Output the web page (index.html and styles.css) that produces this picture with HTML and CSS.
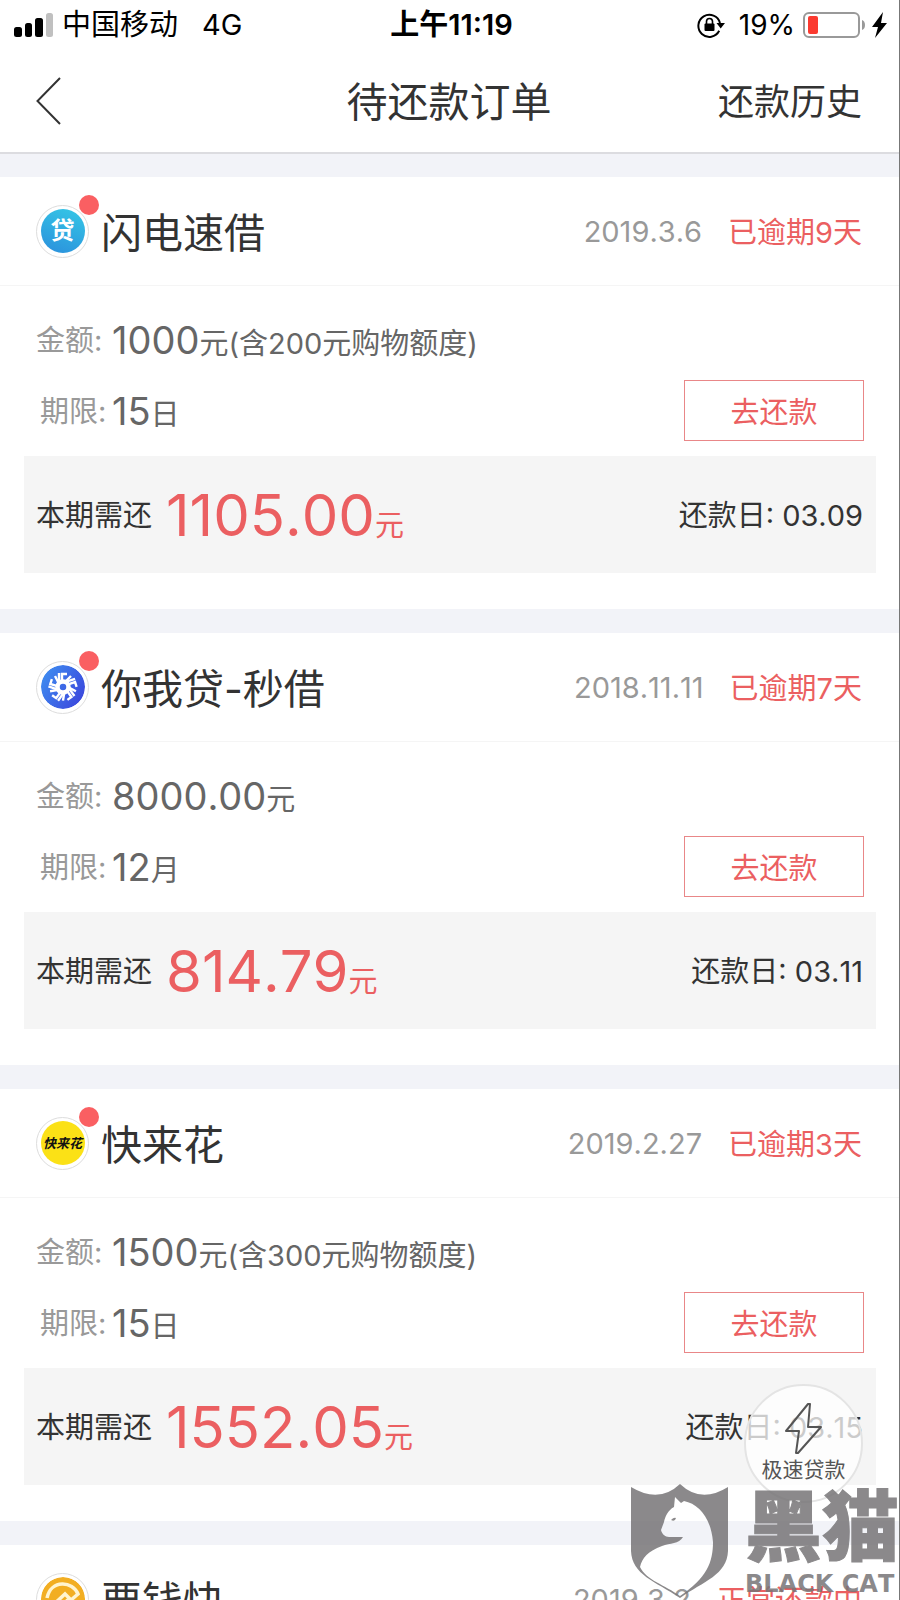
FILE: index.html
```html
<!DOCTYPE html>
<html lang="zh-CN">
<head>
  <meta charset="UTF-8" />
  <meta name="viewport" content="width=device-width, initial-scale=1.0"/>
  <title>待还款订单</title>
  <link rel="stylesheet" href="styles.css">
</head>
<body>

  <div class="screen">

    <div class="status-bar">
      <div class="status-left">
        <svg class="signal" width="40" height="26" viewBox="0 0 40 26">
          <rect x="0" y="15" width="8" height="10" rx="2.5" />
          <rect x="11" y="11" width="7" height="14" rx="2.5" />
          <rect x="21" y="6" width="8" height="19" rx="2.5" />
          <rect x="32" y="1" width="7" height="24" rx="2.5" fill="#c0c0c0" />
        </svg>
        <span class="carrier">中国移动</span>
        <span>4G</span>
      </div>
      <div class="clock">上午11:19</div>
      <div class="status-right">
        <svg width="28" height="26" viewBox="0 0 28 26">
          <path d="M22.2 18.8A11 11 0 1 1 23 11" fill="none" stroke="#000" stroke-width="2" />
          <path d="M19.5 11h8.5l-4.3 5.5z" />
          <rect x="7.5" y="11.5" width="10" height="7.5" rx="1" />
          <path d="M9.5 12V9.500a3 3 0 0 1 6 0V12" fill="none" stroke="#000" stroke-width="1.6" />
        </svg>
        <span class="percent">19%</span>
        <svg width="86" height="28" viewBox="0 0 86 28">
          <rect x="1" y="2" width="55" height="24" rx="5" fill="#fff" stroke="#999" stroke-width="2" />
          <rect x="5" y="5" width="10" height="18" rx="2" fill="#fb3a30" />
          <path d="M59 9q3 1 3 5t-3 5z" fill="#999" />
          <path d="M80 1L69 16h6l-3 11 12-15h-6z" />
        </svg>
      </div>
    </div>

    <header class="nav">
      <a class="back" href="#" aria-label="返回">
        <svg width="26" height="48" viewBox="0 0 26 48">
          <path d="M24 1L1.500 24 24 47" fill="none" stroke="#333" stroke-width="2" />
        </svg>
      </a>
      <h1>待还款订单</h1>
      <a class="history" href="#">还款历史</a>
    </header>

    <main class="orders">

      <section class="order">
        <div class="order-head">
          <div class="logo"><span class="logo-face blue">贷</span><i class="dot"></i></div>
          <h2>闪电速借</h2>
          <span class="date">2019.3.6</span>
          <span class="state">已逾期9天</span>
        </div>
        <div class="order-info">
          <div class="row"><span class="label">金额:</span><span class="value"><b>1000</b>元(含200元购物额度)</span></div>
          <div class="row">
            <span class="label term">期限:</span><span class="value"><b>15</b>日</span>
            <button class="pay">去还款</button>
          </div>
        </div>
        <div class="due">
          <span class="due-label">本期需还</span>
          <span class="sum"><b>1105.00</b>元</span>
          <span class="due-label due-day">还款日: 03.09</span>
        </div>
      </section>

      <section class="order">
        <div class="order-head">
          <div class="logo">
            <svg class="logo-face" width="44" height="44" viewBox="-22 -22 44 44">
              <defs>
                <linearGradient id="indigo" x1="0" y1="0.2" x2="1" y2="0.8">
                  <stop offset="0" stop-color="#3f8df0" />
                  <stop offset="1" stop-color="#3b45dc" />
                </linearGradient>
                <path id="blade" d="M-4 -4V-14M-1 -4V-13H4M2 -5L8 -11" />
              </defs>
              <circle r="22" fill="url(#indigo)" />
              <g fill="none" stroke="#fff" stroke-width="2.400">
                <circle r="5.500" stroke-width="4.500" />
                <use href="#blade" />
                <use href="#blade" transform="rotate(72)" />
                <use href="#blade" transform="rotate(144)" />
                <use href="#blade" transform="rotate(216)" />
                <use href="#blade" transform="rotate(288)" />
              </g>
            </svg>
            <i class="dot"></i>
          </div>
          <h2>你我贷-秒借</h2>
          <span class="date">2018.11.11</span>
          <span class="state">已逾期7天</span>
        </div>
        <div class="order-info">
          <div class="row"><span class="label">金额:</span><span class="value"><b>8000.00</b>元</span></div>
          <div class="row">
            <span class="label term">期限:</span><span class="value"><b>12</b>月</span>
            <button class="pay">去还款</button>
          </div>
        </div>
        <div class="due">
          <span class="due-label">本期需还</span>
          <span class="sum"><b>814.79</b>元</span>
          <span class="due-label due-day">还款日: 03.11</span>
        </div>
      </section>

      <section class="order">
        <div class="order-head">
          <div class="logo"><span class="logo-face yellow">快来花</span><i class="dot"></i></div>
          <h2>快来花</h2>
          <span class="date">2019.2.27</span>
          <span class="state">已逾期3天</span>
        </div>
        <div class="order-info">
          <div class="row"><span class="label">金额:</span><span class="value"><b>1500</b>元(含300元购物额度)</span></div>
          <div class="row">
            <span class="label term">期限:</span><span class="value"><b>15</b>日</span>
            <button class="pay">去还款</button>
          </div>
        </div>
        <div class="due">
          <span class="due-label">本期需还</span>
          <span class="sum"><b>1552.05</b>元</span>
          <span class="due-label due-day">还款日: 03.15</span>
        </div>
      </section>

      <section class="order">
        <div class="order-head">
          <div class="logo">
            <svg class="logo-face" width="44" height="44" viewBox="0 0 44 44">
              <circle cx="22" cy="22" r="22" fill="#f2ae22" />
              <g fill="none" stroke="#fff4cf" stroke-width="3.500">
                <path d="M6 21C10 2 32 4 37 17L30 23 24 17 11 29" />
                <path d="M20 29l9-8M38 24A16 16 0 0 1 10 33" />
              </g>
            </svg>
          </div>
          <h2>要钱快</h2>
          <span class="date">2019.3.2</span>
          <span class="state">正常还款中</span>
        </div>
      </section>

    </main>

    <button class="quick-loan">
      <svg width="40" height="54" viewBox="0 0 40 54">
        <path d="M24 2L2 29h13l-3 22h2L37 25H24l2-23z" fill="none" stroke="#555" stroke-width="2" stroke-linejoin="round" />
      </svg>
      极速贷款
    </button>

    <div class="watermark">
      <svg width="98" height="116" viewBox="0 0 98 116">
        <path fill-rule="evenodd" d="M0 3Q28 20 49 0 70 20 97 3V67C96 91 73 97 49 114 24 97 1 91 0 67Z
          M9 83C15 96 34 101 49 112 76 94 82 78 82 58 80 34 68 20 53 17L50 19 44 13 43 23C37 26 34 33 33 38L30 46C31 50 34 53 38 53L52 53C48 60 39 59 31 62 17 67 11 74 9 83Z" />
        <path d="M40 36q3-3 5-2-1 4-5 2z" />
      </svg>
      <div class="watermark-text">
        <span class="cat-cn">黑猫</span>
        <span class="cat-en">BLACK CAT</span>
      </div>
    </div>

  </div>

</body>
</html>
```
FILE: styles.css
```css
* {
  box-sizing: border-box;
}

body {
  margin: 0;
  font-family: Inter, "Noto Sans CJK SC", sans-serif;
  font-size: 29px;
  font-kerning: none;
  color: #333;
  background: #f2f3f8;
}

h1, h2, b {
  margin: 0;
  font-weight: 400;
}

a {
  color: inherit;
  text-decoration: none;
}

svg {
  display: block;
}

.screen {
  position: relative;
  height: 100vh;
  overflow: hidden;
  border-right: 1px solid #777;
}

/* status bar */
.status-bar {
  display: grid;
  grid-template-columns: 1fr auto 1fr;
  align-items: center;
  height: 50px;
  padding: 0 10px 0 14px;
  background: #fff;
  color: #000;
  font-size: 29px;
  line-height: 48px;
}

.status-left, .status-right {
  display: flex;
  align-items: center;
}

.status-right {
  justify-content: flex-end;
  font-size: 28px;
}

.carrier {
  margin: 0 24px 0 8px;
}

.clock {
  font-weight: 600;
}

.percent {
  margin: 0 8px 0 14px;
}

/* title bar */
.nav {
  display: grid;
  grid-template-columns: 1fr auto 1fr;
  align-items: center;
  height: 104px;
  padding: 0 37px 0 36px;
  background: #fff;
  border-bottom: 2px solid #dcdce0;
}

.nav h1 {
  padding-bottom: 4px;
  font-size: 41px;
}

.history {
  justify-self: end;
  padding-bottom: 4px;
  font-size: 36px;
}

/* orders */
.orders {
  display: flex;
  flex-direction: column;
  gap: 24px;
  padding-top: 23px;
}

.order {
  padding-bottom: 36px;
  background: #fff;
}

.order-head {
  display: flex;
  align-items: center;
  height: 109px;
  padding: 0 37px 0 36px;
  border-bottom: 1px solid #f5f5f5;
}

.order-head h2 {
  flex: 1;
  margin-left: 12px;
  padding-bottom: 2px;
  font-size: 41px;
}

.logo {
  position: relative;
  display: flex;
  align-items: center;
  justify-content: center;
  width: 53px;
  height: 53px;
  border: 1px solid #ddd;
  border-radius: 50%;
}

.logo-face {
  width: 44px;
  height: 44px;
  border-radius: 50%;
  text-align: center;
  line-height: 44px;
  font-weight: 700;
  white-space: nowrap;
}

.blue {
  background: linear-gradient(20deg, #2b8fdc, #35c8e6);
  color: #fff;
  font-size: 24px;
}

.yellow {
  background: #fbe116;
  color: #111;
  font-size: 13px;
  font-style: italic;
}

.dot {
  position: absolute;
  top: -11px;
  right: -11px;
  width: 20px;
  height: 20px;
  border-radius: 50%;
  background: #fa5f62;
}

.date {
  margin-right: 26px;
  color: #999;
}

.state {
  padding-bottom: 2px;
  color: #eb5f61;
}

.order-info {
  padding: 18px 35px 10px 36px;
}

.row {
  display: flex;
  align-items: center;
  height: 71px;
}

.label {
  width: 76px;
  padding-bottom: 4px;
  color: #999;
}

.term {
  padding-left: 4px;
}

.value {
  color: #666;
}

.value b {
  font-size: 38px;
}

.pay {
  width: 180px;
  height: 61px;
  margin-left: auto;
  padding: 0 0 2px;
  border: 1px solid #e98788;
  background: #fff;
  color: #eb5f61;
  font-family: inherit;
  font-size: 29px;
}

.due {
  display: flex;
  align-items: center;
  height: 117px;
  margin: 0 23px 0 24px;
  padding: 0 13px 0 12px;
  background: #f5f5f5;
}

.due-label {
  padding-bottom: 4px;
}

.sum {
  margin-left: 14px;
  color: #eb5f61;
}

.sum b {
  font-size: 58px;
}

.due-day {
  margin-left: auto;
}

/* floating loan button */
.quick-loan {
  position: absolute;
  right: 36px;
  bottom: 97px;
  display: flex;
  flex-direction: column;
  align-items: center;
  width: 119px;
  height: 119px;
  padding: 16px 0 0;
  border: 2px solid #e4e4e4;
  border-radius: 50%;
  background: rgba(255, 255, 255, 0.75);
  color: #555;
  font-family: inherit;
  font-size: 21px;
  line-height: 28px;
}

/* corner watermark */
.watermark {
  position: absolute;
  right: 0;
  bottom: 0;
  display: flex;
  gap: 16px;
  color: #777577;
  fill: #777577;
  opacity: 0.85;
}

.watermark-text {
  display: flex;
  flex-direction: column;
  font-weight: 900;
}

.cat-cn {
  font-size: 77px;
  line-height: 86px;
  -webkit-text-stroke: 1px #777577;
}

.cat-en {
  font-family: "DejaVu Sans", sans-serif;
  font-weight: 700;
  font-size: 24px;
  line-height: 28px;
}
```
